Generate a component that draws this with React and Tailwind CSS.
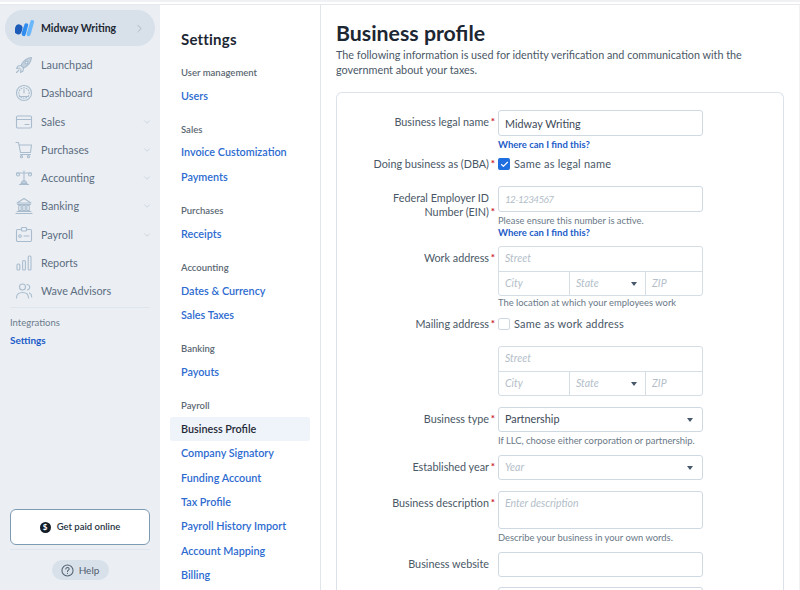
import React from "react";
import { ChevronDown, ChevronRight, Check } from "lucide-react";

const FONT = "font-['Lato','Liberation_Sans',sans-serif]";

function Ico({ children }) {
  return (
    <svg viewBox="0 0 18 18" className="w-[18px] h-[18px] shrink-0" fill="none" stroke="#a9bccd" strokeWidth="1.1" strokeLinecap="round" strokeLinejoin="round">
      {children}
    </svg>
  );
}

const icons = {
  rocket: (
    <Ico>
      <path d="M6 9.5C8 5 11.5 2 16.5 1.5 16 6.5 13 10 8.5 12z" fill="#c3d1de" />
      <circle cx="11.5" cy="6.5" r="1.4" fill="#ebeff4" />
      <path d="M6 9.5 3 10l-1.5 2.5L5 12M8.5 12 8 15l-2.5 1.5L6 13M4 14l-2.5 2.5" />
    </Ico>
  ),
  gauge: (
    <Ico>
      <circle cx="9" cy="9" r="7.5" />
      <circle cx="9" cy="9" r="5.2" strokeDasharray="1 1.6" />
      <path d="M9 9 9 5.5M4.5 12.5h9" />
    </Ico>
  ),
  card: (
    <Ico>
      <rect x="1.5" y="3" width="15" height="12" rx="1.2" />
      <path d="M1.5 6.5h15M10 11.5h4" />
    </Ico>
  ),
  cart: (
    <Ico>
      <path d="M1 1.5h2.5L5.5 11.5h10l1-7.5H4" />
      <path d="M5.5 13.5h10" />
      <circle cx="6.5" cy="15.7" r="1.1" />
      <circle cx="13.5" cy="15.7" r="1.1" />
    </Ico>
  ),
  scale: (
    <Ico>
      <path d="M1.5 4h15M9 2v10" />
      <circle cx="3" cy="5.5" r="1.5" />
      <circle cx="15" cy="5.5" r="1.5" />
      <path d="M7.5 12h3l1.5 2.5H6z" fill="#c3d1de" />
      <path d="M4.5 15.5h9" />
    </Ico>
  ),
  bank: (
    <Ico>
      <path d="M2 6 9 1.5 16 6zM2.5 7.5h13M2 14.5h14M1 16.5h16" />
      <rect x="3.8" y="8.5" width="2.4" height="5" />
      <rect x="7.8" y="8.5" width="2.4" height="5" />
      <rect x="11.8" y="8.5" width="2.4" height="5" />
    </Ico>
  ),
  badge: (
    <Ico>
      <rect x="1.5" y="3.5" width="15" height="12" rx="1.2" />
      <rect x="6.5" y="1.5" width="5" height="3.5" rx="0.8" fill="#ebeff4" />
      <circle cx="5" cy="10" r="1.3" />
      <path d="M9 10h5" />
    </Ico>
  ),
  bars: (
    <Ico>
      <rect x="2" y="10" width="2.8" height="6" rx="1" />
      <rect x="7.6" y="6.5" width="2.8" height="9.5" rx="1" />
      <rect x="13.2" y="2" width="2.8" height="14" rx="1" />
    </Ico>
  ),
  people: (
    <Ico>
      <circle cx="7.5" cy="5" r="3" />
      <path d="M1.5 16c0-3.5 2.5-5.5 6-5.5s6 2 6 5.5M12 2.5c1.8.4 2.8 1.5 2.8 2.8S13.8 7.5 12.5 8M14.5 11c1.5.7 2.2 2.2 2.2 4" />
    </Ico>
  ),
};

const NAV = [
  ["Launchpad", "rocket", false],
  ["Dashboard", "gauge", false],
  ["Sales", "card", true],
  ["Purchases", "cart", true],
  ["Accounting", "scale", true],
  ["Banking", "bank", true],
  ["Payroll", "badge", true],
  ["Reports", "bars", false],
  ["Wave Advisors", "people", false],
];

const SETTINGS = [
  ["User management", ["Users"]],
  ["Sales", ["Invoice Customization", "Payments"]],
  ["Purchases", ["Receipts"]],
  ["Accounting", ["Dates & Currency", "Sales Taxes"]],
  ["Banking", ["Payouts"]],
  ["Payroll", ["Business Profile", "Company Signatory", "Funding Account", "Tax Profile", "Payroll History Import", "Account Mapping", "Billing"]],
];

function Sidebar() {
  return (
    <aside className="w-[160px] shrink-0 bg-[#ebeff4] flex flex-col px-[5px] pt-[5px]">
      <div className="h-[36px] rounded-[18px] bg-[#d8e0ea] flex items-center pl-[10px] pr-[9px]">
        <svg viewBox="0 0 22 20" className="w-[20px] h-[20px] shrink-0">
          <rect x="0" y="6" width="8" height="11" rx="4" transform="rotate(15 4 11)" fill="#1c5cb8" />
          <path d="M10 19c-2.5 0-3-2-2.5-4L10.5 6c.7-2.2 4.5-1.5 4 1l-2.5 9c-.4 1.8-1 3-2 3z" fill="#2f8df0" />
          <path d="M15 19c-2 0-2.5-1.5-2-3.5L17 2.5c.7-2.2 4.5-1.500 4 1L17.5 16c-.5 1.8-1.3 3-2.5 3z" fill="#6bb7fb" />
        </svg>
        <span className="ml-[6px] pt-[1px] text-[10.5px] font-bold text-[#1c2733] flex-1">Midway Writing</span>
        <ChevronRight className="w-[13px] h-[13px] text-[#9aa9b8]" strokeWidth={1.3} />
      </div>
      <nav className="mt-[5px] flex flex-col">
        {NAV.map(([name, icon, more]) => (
          <div key={name} className="h-[28.25px] flex items-center pl-[10px] pr-[3px]">
            {icons[icon]}
            <span className="ml-[8px] text-[10.8px] text-[#5b6d80] flex-1">{name}</span>
            {more && <ChevronDown className="w-[10px] h-[10px] text-[#b5c3d1]" strokeWidth={1.5} />}
          </div>
        ))}
      </nav>
      <div className="mt-[2px] mx-[5px] border-t border-[#dfe5ec]" />
      <div className="mt-[8px] ml-[5px] text-[9.5px] text-[#6b7b8c]">Integrations</div>
      <div className="mt-[2px] ml-[5px] text-[10px] font-bold text-[#1c5cc8]">Settings</div>
      <div className="mt-auto mx-[5px] flex flex-col items-center pb-[10px]">
        <button className="w-full h-[36px] bg-white rounded-[6px] border-[1.5px] border-[#7d9cb3] flex items-center justify-center gap-[6px]">
          <span className="w-[11px] h-[11px] rounded-full bg-[#111c28] text-white text-[8px] leading-[11px] font-bold">$</span>
          <span className="text-[9.5px] font-semibold text-[#28353f]">Get paid online</span>
        </button>
        <div className="w-full mt-[4px] border-t border-[#dfe5ec]" />
        <div className="mt-[10px] h-[20px] w-[57px] rounded-full bg-[#d8e0ea] flex items-center justify-center gap-[5px] text-[#50606f]">
          <svg viewBox="0 0 14 14" className="w-[13px] h-[13px]" fill="none" stroke="currentColor" strokeWidth="1.1" strokeLinecap="round">
            <circle cx="7" cy="7" r="6" />
            <path d="M5.2 5.5C5.2 4.3 6 3.8 7 3.8S8.8 4.4 8.8 5.4C8.8 6.6 7 6.7 7 8.1" />
            <path d="M7 10.1v.1" />
          </svg>
          <span className="text-[10px]">Help</span>
        </div>
      </div>
    </aside>
  );
}

function SettingsNav() {
  return (
    <div className="w-[161px] shrink-0 bg-white border-r border-[#e1e6eb] pl-[10px] pr-[10px] pt-[24px]">
      <h2 className="pl-[11px] text-[15px] leading-[20px] font-bold text-[#1c2733] tracking-[0.2px]">Settings</h2>
      {SETTINGS.map(([group, items], i) => (
        <div key={group} className={i === 0 ? "mt-[18px]" : "mt-[15.9px]"}>
          <div className="pl-[11px] h-[12px] leading-[12px] text-[9.5px] font-semibold text-[#5b6873]">{group}</div>
          <div className="mt-[4.6px] flex flex-col">
            {items.map((it) => (
              <div
                key={it}
                className={
                  "pl-[11px] h-[24.4px] leading-[24.4px] text-[10.8px] font-semibold rounded-[3px] " +
                  (it === "Business Profile" ? "bg-[#eff3fa] text-[#1f2a36]" : "text-[#2d6bd0]")
                }
              >
                {it}
              </div>
            ))}
          </div>
        </div>
      ))}
    </div>
  );
}

function Row({ label, req, mt, center, children }) {
  return (
    <div className={"flex " + (center ? "items-center " : "items-start ") + mt}>
      <div className={"w-[153px] shrink-0 pr-[9px] text-right text-[10.8px] leading-[14px] text-[#4a5866] relative " + (center ? "" : "pt-[5px]")}>
        {label}
        {req && <span className="absolute right-[3px] bottom-[1px] text-[#c8202f] text-[10px] font-bold">*</span>}
      </div>
      <div className="w-[205px]">{children}</div>
    </div>
  );
}

const boxCls = "border border-[#cfd9e3] rounded-[3px] bg-white flex items-center px-[6px] text-[10.8px]";
const ph = "italic text-[#b3bec9] text-[10.5px]";
const hint = "text-[9.4px] leading-[12px] text-[#6a7987]";
const linkCls = "text-[9.5px] leading-[12px] font-bold text-[#1c5cc8]";
const checkRow = "h-[14px] leading-[14px] flex items-center gap-[4px] text-[11px] text-[#4a5866] tracking-[0.2px]";

function Caret() {
  return <span className="w-0 h-0 border-l-[3.5px] border-r-[3.5px] border-t-[4px] border-l-transparent border-r-transparent border-t-[#46586a]" />;
}

function Address() {
  return (
    <div className="border border-[#d5dde5] rounded-[3px] bg-white h-[50px] flex flex-col text-[10.5px]">
      <div className="h-[25px] border-b border-[#d5dde5] flex items-center px-[6px]"><span className={ph}>Street</span></div>
      <div className="flex-1 flex">
        <div className="w-[71px] border-r border-[#d5dde5] flex items-center px-[6px]"><span className={ph}>City</span></div>
        <div className="w-[76px] border-r border-[#d5dde5] flex items-center justify-between pl-[6px] pr-[8px]"><span className={ph}>State</span><Caret /></div>
        <div className="flex-1 flex items-center px-[6px]"><span className={ph}>ZIP</span></div>
      </div>
    </div>
  );
}

function Form() {
  return (
    <div className="flex-1 min-w-0 pl-[15px] pr-[15px] pt-[14px] border-r border-[#f0f2f4]">
      <h1 className="text-[21.3px] leading-[28px] font-bold text-[#1c2733]">Business profile</h1>
      <p className="text-[10.8px] leading-[15px] text-[#4a5866]">
        The following information is used for identity verification and communication with the government about your taxes.
      </p>
      <div className="mt-[15px] border border-[#dbe2e9] rounded-t-[6px] border-b-0 h-[600px] pl-[8px] pt-[17px]">
        <Row label="Business legal name" req mt="mt-0">
          <div className={boxCls + " h-[26px] pt-[2px] text-[#3d4a57]"}>Midway Writing</div>
          <div className={linkCls + " mt-[3px]"}>Where can I find this?</div>
        </Row>
        <Row label="Doing business as (DBA)" req mt="mt-[6px]" center>
          <div className={checkRow}>
            <span className="w-[12px] h-[12px] rounded-[2px] bg-[#1f6fe0] flex items-center justify-center"><Check className="w-[9px] h-[9px] text-white" strokeWidth={3} /></span>
            Same as legal name
          </div>
        </Row>
        <Row label={<>Federal Employer ID<br />Number (EIN)</>} req mt="mt-[15px]">
          <div className={boxCls + " h-[26px]"}><span className="italic text-[#b3bec9] text-[10px] tracking-[-0.7px]">12-1234567</span></div>
          <div className={hint + " mt-[3px]"}>Please ensure this number is active.</div>
          <div className={linkCls}>Where can I find this?</div>
        </Row>
        <Row label="Work address" req mt="mt-[7px]">
          <Address />
          <div className={hint + " mt-[1px]"}>The location at which your employees work</div>
        </Row>
        <Row label="Mailing address" req mt="mt-[8px]" center>
          <div className={checkRow}>
            <span className="w-[12px] h-[12px] rounded-[2px] border border-[#cfd9e3] bg-white" />
            Same as work address
          </div>
        </Row>
        <Row mt="mt-[15px]">
          <Address />
        </Row>
        <Row label="Business type" req mt="mt-[11px]">
          <div className={boxCls + " h-[25px] justify-between pr-[9px] text-[#3d4a57]"}>Partnership<Caret /></div>
          <div className={hint + " mt-[3px]"}>If LLC, choose either corporation or partnership.</div>
        </Row>
        <Row label="Established year" req mt="mt-[8px]">
          <div className={boxCls + " h-[25px] justify-between pr-[9px]"}><span className={ph}>Year</span><Caret /></div>
        </Row>
        <Row label="Business description" req mt="mt-[11px]">
          <div className="border border-[#cfd9e3] rounded-[3px] bg-white h-[38px] px-[6px] pt-[2px] leading-[13px]"><span className={ph}>Enter description</span></div>
          <div className={hint + " mt-[3px]"}>Describe your business in your own words.</div>
        </Row>
        <Row label="Business website" mt="mt-[8px]">
          <div className={boxCls + " h-[25px]"} />
        </Row>
        <Row mt="mt-[10px]">
          <div className={boxCls + " h-[25px]"} />
        </Row>
      </div>
    </div>
  );
}

export default function App() {
  return (
    <div className={"w-[800px] h-[590px] overflow-hidden bg-white flex flex-col " + FONT}>
      <div className="h-[5px] shrink-0 bg-white border-t-2 border-t-[#f0f1f4] border-b border-b-[#e6eaee]" />
      <div className="flex-1 min-h-0 flex">
        <Sidebar />
        <SettingsNav />
        <Form />
      </div>
    </div>
  );
}
